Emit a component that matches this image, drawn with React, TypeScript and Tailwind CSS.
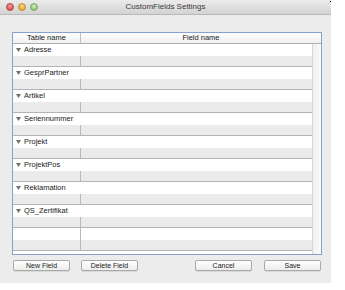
import React from "react";

const groups = [
  "Adresse",
  "GesprPartner",
  "Artikel",
  "Seriennummer",
  "Projekt",
  "ProjektPos",
  "Reklamation",
  "QS_Zertifikat",
];

function Tri() {
  return (
    <svg width="5" height="4" viewBox="0 0 5 4" className="shrink-0">
      <polygon points="0,0 5,0 2.5,4" fill="#707070" />
    </svg>
  );
}

function GroupRow({ label }: { label: string }) {
  return (
    <div className="h-[11.5px] bg-white flex items-center pl-[3px] gap-[3px]">
      <Tri />
      <span className="text-[7.5px] leading-none text-[#1a1a1a]">{label}</span>
    </div>
  );
}

function GrayRow() {
  return (
    <div className="h-[11.5px] bg-[#ebebeb] flex border-b border-[#b4b4b4]">
      <div className="w-[68px] border-r border-[#b9b9b9]" />
      <div className="flex-1" />
    </div>
  );
}

function Btn({ label, className }: { label: string; className?: string }) {
  return (
    <div
      className={
        "w-[57px] h-[11px] rounded-[2px] border border-[#a9a9a9] bg-gradient-to-b from-white to-[#ededed] flex items-center justify-center text-[7px] leading-none text-[#1a1a1a] shadow-[0_1px_0_rgba(0,0,0,0.08)] " +
        (className ?? "")
      }
    >
      {label}
    </div>
  );
}

export default function App() {
  return (
    <div
      className="w-[345px] h-[290px] bg-white relative"
      style={{ fontFamily: '"Liberation Sans", Arial, sans-serif' }}
    >
      <div className="w-[331px] h-[283px] bg-[#ececec] flex flex-col">
        {/* title bar */}
        <div className="h-[15px] bg-gradient-to-b from-[#ebebeb] to-[#d3d3d3] border-b border-[#b8b8b8] relative flex items-center justify-center">
          <div className="absolute left-[6px] top-[3px] flex gap-[4px]">
            <div className="w-[8px] h-[8px] rounded-full bg-[radial-gradient(circle_at_50%_35%,#f5a3a0,#d9534f_70%)] border border-[#b94a45]" />
            <div className="w-[8px] h-[8px] rounded-full bg-[radial-gradient(circle_at_50%_35%,#f9dd9a,#e2a93a_70%)] border border-[#c28f2c]" />
            <div className="w-[8px] h-[8px] rounded-full bg-[radial-gradient(circle_at_50%_35%,#d3efc4,#8cc56f_70%)] border border-[#78a95f]" />
          </div>
          <span className="text-[8px] leading-none text-[#3a3a3a]">CustomFields Settings</span>
        </div>

        {/* content */}
        <div className="pt-[17px] pl-[12px] pr-[10px] flex flex-col">
          <div className="w-[310px] h-[223px] border border-[#86a2cc] bg-white flex flex-col">
            {/* header */}
            <div className="h-[11px] flex border-b border-[#b0b0b0] bg-gradient-to-b from-white to-[#f0f0f0] text-[7.5px] leading-none text-[#1a1a1a]">
              <div className="w-[68px] border-r border-[#c0c0c0] flex items-center justify-center">Table name</div>
              <div className="flex-1 flex items-center justify-center">Field name</div>
            </div>
            <div className="flex-1 flex">
              <div className="w-[299px] flex flex-col">
                {groups.map((g) => (
                  <React.Fragment key={g}>
                    <GroupRow label={g} />
                    <GrayRow />
                  </React.Fragment>
                ))}
                <div className="h-[11.5px] bg-white flex">
                  <div className="w-[68px] border-r border-[#b9b9b9]" />
                </div>
                <GrayRow />
              </div>
              <div className="flex-1 border-l border-[#d6d6d6] bg-gradient-to-r from-[#f0f0f0] to-[#fafafa]" />
            </div>
          </div>

          {/* buttons */}
          <div className="mt-[5px] flex w-[309px] pl-[1px]">
            <Btn label="New Field" />
            <Btn label="Delete Field" className="ml-[11px]" />
            <div className="flex-1" />
            <Btn label="Cancel" />
            <Btn label="Save" className="ml-[12px]" />
          </div>
        </div>
      </div>
      <div className="absolute left-[330px] top-[1px] w-[1px] h-[1px] bg-black" />
    </div>
  );
}
